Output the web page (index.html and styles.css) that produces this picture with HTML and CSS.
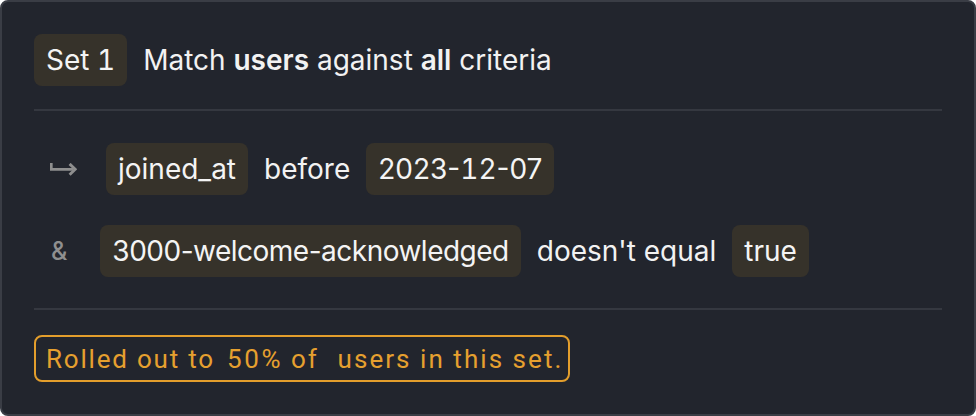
FILE: index.html
```html
<!DOCTYPE html>
<html lang="en">
<head>
<meta charset="utf-8">
<title>Set 1</title>
<link rel="stylesheet" href="styles.css">
</head>
<body>
<div class="card">
  <div class="header">
    <span class="badge num">Set 1</span>
    <span class="text">Match <b>users</b> against <b>all</b> criteria</span>
  </div>
  <div class="divider"></div>
  <div class="rows">
    <div class="row">
      <svg class="op op-arrow" width="27" height="13" viewBox="0 0 27 13" aria-hidden="true">
        <path d="M1.3 0 V6.3 H23" fill="none" stroke="#8e8e8e" stroke-width="2.7"/>
        <path d="M19.6 0.9 L25.2 6.3 L19.6 11.8" fill="none" stroke="#8e8e8e" stroke-width="2.9" stroke-linejoin="miter"/>
      </svg>
      <span class="badge">joined_at</span>
      <span class="text">before</span>
      <span class="badge">2023-<span class="num">12</span>-07</span>
    </div>
    <div class="row">
      <span class="op op-amp">&amp;</span>
      <span class="badge tight">3000-welcome-acknowledged</span>
      <span class="text">doesn't equal</span>
      <span class="badge">true</span>
    </div>
  </div>
  <div class="divider"></div>
  <div class="footer">
    <div class="rollout"><span>Rolled out to</span><span class="pct">50%</span><span class="of">of</span><span class="rest">users in this set.</span></div>
  </div>
</div>
</body>
</html>
```
FILE: styles.css
```css
html, body {
  margin: 0;
  padding: 0;
  background: #ffffff;
}
.card {
  box-sizing: border-box;
  width: 976px;
  height: 416px;
  background: #22252d;
  border: 2px solid #3a3d45;
  border-radius: 8px;
  padding: 32px 32px;
  font-family: Inter, "Noto Sans", sans-serif;
  font-size: 28px;
  color: #f2f2f2;
}
.num {
  font-variant-numeric: tabular-nums;
}
.header {
  display: flex;
  align-items: center;
  gap: 16px;
  margin-bottom: 23px;
}
.badge {
  display: inline-flex;
  align-items: center;
  height: 52px;
  padding: 0 12px;
  border-radius: 8px;
  background: #36322a;
  color: #f4f4f4;
  white-space: nowrap;
}
.badge.tight {
  letter-spacing: -0.5px;
}
.text b {
  font-weight: 600;
}
.divider {
  height: 2px;
  background: #353840;
}
.rows {
  display: flex;
  flex-direction: column;
  gap: 30px;
  padding: 32px 0 31px;
}
.row {
  display: flex;
  align-items: center;
  gap: 16px;
  padding-left: 16px;
}
.op-arrow {
  display: block;
  margin-right: 13px;
}
.op-amp {
  font-size: 25px;
  font-weight: 500;
  color: #8f8f8f;
  padding-left: 1px;
  margin-right: 17px;
}
.footer {
  padding-top: 25px;
  display: flex;
}
.rollout {
  box-sizing: border-box;
  height: 47px;
  display: flex;
  align-items: center;
  border: 2px solid #e39e2c;
  border-radius: 8px;
  padding: 0 5px 0 10px;
  font-family: Roboto, "Liberation Sans", sans-serif;
  font-size: 26px;
  letter-spacing: 1.8px;
  color: #e6a02f;
  white-space: nowrap;
}
.rollout .pct {
  margin-left: 12px;
  letter-spacing: 2.6px;
}
.rollout .of {
  margin-left: 8px;
}
.rollout .rest {
  margin-left: 19px;
  letter-spacing: 2.05px;
}
```
